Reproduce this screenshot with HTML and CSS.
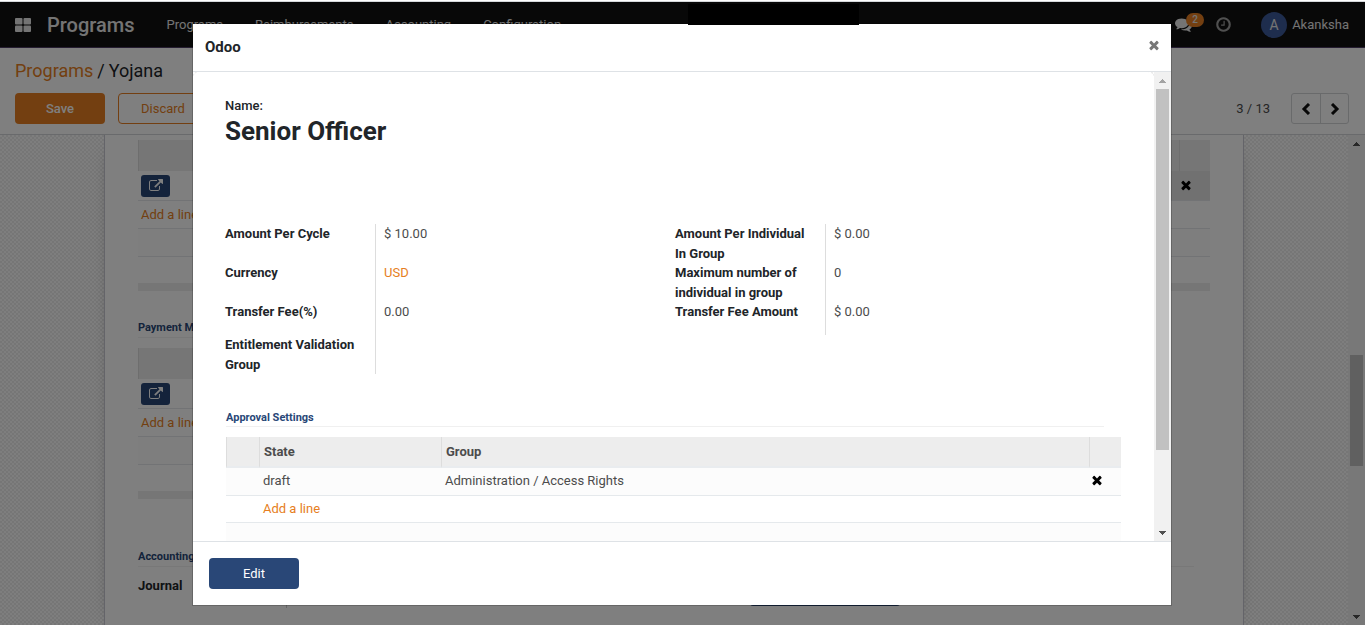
FILE: index.html
```html
<!DOCTYPE html>
<html lang="en">
<head>
<meta charset="utf-8">
<title>Odoo</title>
<link rel="stylesheet" href="styles.css">
</head>
<body>
<svg class="sprite" aria-hidden="true">
  <symbol id="i-times" viewBox="0 0 1792 1792"><path d="M1490 1322q0 40-28 68l-136 136q-28 28-68 28t-68-28l-294-294-294 294q-28 28-68 28t-68-28l-136-136q-28-28-28-68t28-68l294-294-294-294q-28-28-28-68t28-68l136-136q28-28 68-28t68 28l294 294 294-294q28-28 68-28t68 28l136 136q28 28 28 68t-28 68l-294 294 294 294q28 28 28 68z"/></symbol>
  <symbol id="i-link" viewBox="0 0 1792 1792"><path d="M1408 928v320q0 119-84.500 203.500t-203.500 84.500h-832q-119 0-203.500-84.500t-84.500-203.500v-832q0-119 84.500-203.500t203.500-84.500h704q14 0 23 9t9 23v64q0 14-9 23t-23 9h-704q-66 0-113 47t-47 113v832q0 66 47 113t113 47h832q66 0 113-47t47-113v-320q0-14 9-23t23-9h64q14 0 23 9t9 23zm384-864v512q0 26-19 45t-45 19-45-19l-176-176-652 652q-10 10-23 10t-23-10l-114-114q-10-10-10-23t10-23l652-652-176-176q-19-19-19-45t19-45 45-19h512q26 0 45 19t19 45z"/></symbol>
  <symbol id="i-comments" viewBox="0 0 1792 1792"><path d="M1408 768q0 139-94 257t-256.500 186.500-353.500 68.500q-86 0-176-16-124 88-278 128-36 9-86 16h-3q-11 0-20.500-8t-11.500-21q-1-3-1-6.500t.5-6.500 2-6l2.500-5 3.500-5.500 4-5 4.500-5 4-4.500q5-6 23-25t26-29.500 22.500-29 25-38.500 20.500-44q-124-72-195-177t-71-224q0-139 94-257t256.500-186.500 353.500-68.500 353.500 68.500 256.500 186.500 94 257zm384 256q0 120-71 224.500t-195 176.500q10 24 20.500 44t25 38.500 22.500 29 26 29.500 23 25q1 1 4 4.500t4.500 5 4 5 3.500 5.500l2.500 5 2 6 .5 6.500-1 6.500q-3 14-13 22t-22 7q-50-7-86-16-154-40-278-128-90 16-176 16-271 0-472-132 58 4 88 4 161 0 309-45t264-129q125-92 192-212t67-254q0-77-23-152 129 71 204 178t75 230z"/></symbol>
  <symbol id="i-clock" viewBox="0 0 1792 1792"><path d="M1024 544v448q0 14-9 23t-23 9h-320q-14 0-23-9t-9-23v-64q0-14 9-23t23-9h224v-352q0-14 9-23t23-9h64q14 0 23 9t9 23zm416 352q0-148-73-273t-198-198-273-73-273 73-198 198-73 273 73 273 198 198 273 73 273-73 198-198 73-273zm224 0q0 209-103 385.500t-279.500 279.500-385.500 103-385.500-103-279.500-279.500-103-385.500 103-385.500 279.500-279.500 385.500-103 385.500 103 279.500 279.500 103 385.500z"/></symbol>
  <symbol id="i-apps" viewBox="0 0 16 14"><rect width="7.500" height="6.500" rx="1"/><rect x="8.500" width="7.500" height="6.500" rx="1"/><rect y="7.500" width="7.500" height="6.500" rx="1"/><rect x="8.500" y="7.500" width="7.500" height="6.500" rx="1"/></symbol>
  <symbol id="i-up" viewBox="0 0 7 4"><path d="M3 0h1v1h1v1h1v1h1v1H0V3h1V2h1V1h1z"/></symbol>
  <symbol id="i-down" viewBox="0 0 7 4"><path d="M0 0h7v1H6v1H5v1H4v1H3V3H2V2H1V1H0z"/></symbol>
</svg>

<div class="page">
  <div class="window-edge"></div>
  <header class="navbar">
    <button class="apps" aria-label="Apps"><svg class="icon"><use href="#i-apps"/></svg></button>
    <a class="brand" href="#">Programs</a>
    <nav class="menu">
      <a href="#">Programs</a>
      <a href="#">Reimbursements</a>
      <a href="#">Accounting</a>
      <a href="#">Configuration</a>
    </nav>
    <div class="systray">
      <button class="chat" aria-label="Messages"><svg class="icon"><use href="#i-comments"/></svg><span class="badge">2</span></button>
      <button class="clock" aria-label="Activities"><svg class="icon"><use href="#i-clock"/></svg></button>
      <a class="user" href="#"><span class="avatar">A</span>Akanksha</a>
    </div>
  </header>

  <section class="control">
    <div class="crumbs"><a href="#">Programs</a><span>/</span><span>Yojana</span></div>
    <div class="control-row">
      <button class="btn btn-save">Save</button>
      <button class="btn btn-discard">Discard</button>
      <span class="count">3 / 13</span>
      <div class="pager">
        <button aria-label="Previous"><svg class="chev" viewBox="0 0 10 12"><path d="M8 1 3 6l5 5"/></svg></button>
        <button aria-label="Next"><svg class="chev" viewBox="0 0 10 12"><path d="m2 1 5 5-5 5"/></svg></button>
      </div>
    </div>
  </section>

  <div class="workspace">
    <main class="canvas">
      <div class="sheet">
        <table class="list">
          <thead><tr><th></th><th></th><th class="split"></th></tr></thead>
          <tbody>
            <tr class="record"><td><button class="open" aria-label="Open"><svg class="icon"><use href="#i-link"/></svg></button></td><td class="hot"></td><td class="hot"><button class="remove" aria-label="Delete"><svg class="icon"><use href="#i-times"/></svg></button></td></tr>
            <tr><td colspan="3"><a href="#">Add a line</a></td></tr>
            <tr class="alt"><td colspan="3"></td></tr>
            <tr class="last"><td colspan="3"></td></tr>
          </tbody>
          <tfoot><tr><td colspan="3"></td></tr></tfoot>
        </table>
        <section class="payment">
          <h2 class="heading heading-payment">Payment Management</h2>
          <table class="list">
            <thead><tr><th></th><th></th><th class="split"></th></tr></thead>
            <tbody>
              <tr class="record"><td><button class="open" aria-label="Open"><svg class="icon"><use href="#i-link"/></svg></button></td><td></td><td></td></tr>
              <tr><td colspan="3"><a href="#">Add a line</a></td></tr>
              <tr class="alt"><td colspan="3"></td></tr>
              <tr class="last"><td colspan="3"></td></tr>
            </tbody>
            <tfoot><tr><td colspan="3"></td></tr></tfoot>
          </table>
        </section>
        <h2 class="heading heading-accounting">Accounting</h2>
        <div class="journal"><div class="journal-label">Journal</div><div class="journal-value"><button class="journal-action" aria-label="Action"></button></div></div>
      </div>
    </main>
    <div class="bar page-bar"><svg class="arrow"><use href="#i-up"/></svg><div class="track"><div class="thumb"></div></div><svg class="arrow"><use href="#i-down"/></svg></div>
  </div>
</div>

<div class="overlay">
  <div class="modal" role="dialog" aria-labelledby="dialog-title">
    <header class="modal-head"><h1 id="dialog-title">Odoo</h1><button class="close" aria-label="Close"><svg class="icon"><use href="#i-times"/></svg></button></header>
    <div class="modal-body">
      <div class="form">
        <div class="name-label">Name:</div>
        <h2 class="name">Senior Officer</h2>
        <div class="groups">
          <dl class="fields">
            <dt>Amount Per Cycle</dt><dd>$ 10.00</dd>
            <dt>Currency</dt><dd><a href="#">USD</a></dd>
            <dt class="short">Transfer Fee(%)</dt><dd>0.00</dd>
            <dt>Entitlement Validation Group</dt><dd></dd>
          </dl>
          <dl class="fields">
            <dt>Amount Per Individual In Group</dt><dd>$ 0.00</dd>
            <dt>Maximum number of individual in group</dt><dd>0</dd>
            <dt class="short">Transfer Fee Amount</dt><dd>$ 0.00</dd>
          </dl>
        </div>
        <h3 class="heading heading-approval">Approval Settings</h3>
        <table class="approval">
          <thead><tr><th class="c-handle"></th><th class="c-state">State</th><th>Group</th><th class="c-remove"></th></tr></thead>
          <tbody>
            <tr class="alt"><td></td><td>draft</td><td>Administration / Access Rights</td><td><button class="remove" aria-label="Delete"><svg class="icon"><use href="#i-times"/></svg></button></td></tr>
            <tr><td></td><td colspan="3"><a href="#">Add a line</a></td></tr>
            <tr class="alt"><td colspan="4"></td></tr>
          </tbody>
        </table>
      </div>
      <div class="bar modal-bar"><svg class="arrow faded"><use href="#i-up"/></svg><div class="track"><div class="thumb"></div></div><svg class="arrow"><use href="#i-down"/></svg></div>
    </div>
    <footer class="modal-foot"><button class="btn btn-edit">Edit</button></footer>
  </div>
</div>
<div class="mask"></div>
</body>
</html>
```

FILE: styles.css
```css
:root {
  --orange: #e67e22;
  --navy: #294777;
  --checker: repeating-conic-gradient(#ececec 0 25%, #fdfdfd 0 50%) 0 0 / 4px 4px;
}
* { box-sizing: border-box; }
body {
  margin: 0;
  font: 13px/1.5 Roboto, "Liberation Sans", sans-serif;
  color: #4c4c4c;
  overflow: hidden;
}
a { color: var(--orange); text-decoration: none; }
button { font: inherit; border: 0; padding: 0; background: none; color: inherit; }
h1, h2, h3, dl, dd { margin: 0; }
.sprite { display: none; }
.icon { display: block; width: 14px; height: 14px; fill: currentColor; }

.page { display: flex; flex-direction: column; height: 100vh; background: #fff; }
.window-edge { flex: none; height: 2px; background: #fff; border-bottom: 1px solid #d5d8db; }

.navbar {
  flex: none;
  display: flex;
  align-items: center;
  height: 46px;
  padding: 0 16px 0 15px;
  background: #101010;
  border-bottom: 1px solid #4b3a63;
  color: #e8e8e8;
}
.navbar a { color: inherit; }
.apps .icon { width: 16px; height: 14px; }
.brand { margin-left: 16px; font-size: 20px; font-weight: 500; }
.menu { display: flex; gap: 32px; margin-left: 32px; }
.systray { display: flex; align-items: center; margin-left: auto; }
.chat { position: relative; }
.chat .icon { width: 17px; height: 17px; }
.badge {
  position: absolute;
  left: 11px;
  top: -3px;
  width: 18px;
  height: 14px;
  border-radius: 7px;
  background: var(--orange);
  font-size: 10px;
  line-height: 14px;
  font-weight: 500;
  text-align: center;
}
.clock { margin-left: 23px; color: #a0a0a0; }
.clock .icon { width: 17px; height: 17px; }
.user { display: flex; align-items: center; gap: 5px; margin-left: 29px; }
.avatar {
  width: 26px;
  height: 26px;
  border-radius: 50%;
  background: #3d5a9b;
  font-size: 14px;
  line-height: 26px;
  text-align: center;
}

.control { flex: none; padding: 9px 16px 10px 15px; border-bottom: 1px solid #d3d5d8; }
.crumbs { display: flex; gap: 4px; font-size: 18px; line-height: 28px; color: #212529; }
.control-row { display: flex; align-items: center; margin-top: 8px; }
.btn { width: 90px; height: 31px; border-radius: 4px; }
.btn-save { background: var(--orange); color: #fff; font-weight: 500; }
.btn-discard { margin-left: 13px; border: 1px solid var(--orange); color: var(--orange); }
.count { margin-left: auto; }
.pager { display: flex; margin-left: 21px; border: 1px solid #d2d4d7; border-radius: 3px; }
.pager button { display: grid; place-items: center; width: 28px; height: 29px; }
.pager button + button { border-left: 1px solid #d2d4d7; }
.chev { width: 10px; height: 12px; fill: none; stroke: #111; stroke-width: 3; }

.workspace { flex: 1; display: flex; min-height: 0; }
.canvas { flex: 1; overflow: hidden; background: var(--checker); }
.sheet {
  max-width: 1140px;
  min-height: 100%;
  margin: 0 auto;
  padding: 5px 33px;
  background: #fff;
  border: solid #c8c8d3;
  border-width: 0 1px;
  box-shadow: 0 5px 20px -15px #000;
}
.payment { width: 50%; }
.list { width: 100%; border-collapse: separate; border-spacing: 0; table-layout: fixed; }
.list th { height: 31px; background: #ececec; border-left: 1px solid #ddd; padding: 0; }
.list th:nth-child(2) { border-left: 0; }
.list th:first-child { width: 200px; }
.list .split { width: 31px; }
.list td { height: 28px; padding: 0 3px; line-height: 20px; border-bottom: 1px solid #e4e7ea; }
.list .record td { height: 30px; }
.list .alt td { background: #fcfcfc; }
.list .hot { background: #e2e2e2; }
.list .last td { height: 26px; border-bottom: 0; }
.list tfoot td { height: 8px; background: #ececec; border: 0; padding: 0; }
.open {
  display: grid;
  place-items: center;
  width: 29px;
  height: 22px;
  border-radius: 3px;
  background: var(--navy);
  color: #fff;
}
.remove { display: block; color: #000; margin: -2px 0 0 -3px; }

.heading {
  font-size: 11px;
  line-height: 18px;
  font-weight: 700;
  color: var(--navy);
  border-bottom: 1px solid #f0f0f0;
}
.heading-payment { margin: 28px 16px 10px 0; }
.heading-accounting { margin: 49px 16px 9px 0; }
.journal { display: flex; font-weight: 700; color: #212529; }
.journal-label { width: 148px; }
.journal-value { display: flex; flex: 1; height: 32px; border-left: 1px solid #ccc; }
.journal-action { width: 150px; height: 30px; margin-left: 463px; border-radius: 3px; background: var(--navy); }

.bar { flex: none; display: flex; flex-direction: column; width: 17px; background: #f1f1f1; }
.arrow { flex: none; width: 7px; height: 4px; margin: 7px 5px 6px; fill: #505050; }
.arrow.faded { fill: #a3a3a3; }
.track { flex: 1; display: flex; flex-direction: column; padding: 0 2px; }
.thumb { background: #c1c1c1; }
.page-bar .track { padding-bottom: 142px; }
.page-bar .thumb { flex: none; height: 111px; margin-top: auto; }
.modal-bar .thumb { height: 83%; }

.overlay {
  position: fixed;
  inset: 2px 0 0;
  padding: 21px 1px 19px 0;
  background: rgba(0, 0, 0, .5);
}
.modal {
  display: flex;
  flex-direction: column;
  max-width: 980px;
  height: 100%;
  margin: 0 auto;
  background: #fff;
  background-clip: padding-box;
  border: 1px solid rgba(0, 0, 0, .2);
}
.modal-head {
  flex: none;
  display: flex;
  align-items: center;
  justify-content: space-between;
  height: 48px;
  padding: 0 10px 0 12px;
  border-bottom: 1px solid #dee2e6;
  color: #212529;
}
.modal-head h1 { font-size: 15px; font-weight: 700; }
.close { padding-bottom: 5px; color: #777; }
.modal-body { flex: 1; display: flex; min-height: 0; overflow: hidden; background: var(--checker); }
.form {
  flex: 1;
  min-width: 0;
  padding: 24px 29px 0 32px;
  background: #fff;
  border-radius: 6px 6px 0 0;
  overflow: hidden;
}
.name-label { line-height: 20px; font-weight: 500; color: #212529; }
.name { font-size: 26px; line-height: 30px; font-weight: 700; color: #212529; }
.groups { display: flex; align-items: flex-start; margin-top: 78px; }
.fields { flex: 0 1 450px; display: grid; grid-template-columns: 150px 1fr; }
.fields dt { height: 39px; padding-right: 15px; font-weight: 700; color: #212529; }
.fields .short { height: 33px; }
.fields dd { padding-left: 8px; border-left: 1px solid #ddd; }
.heading-approval { margin: 36px 21px 10px 1px; line-height: 16px; }
.approval {
  width: calc(100% - 5px);
  margin-left: 1px;
  border-collapse: separate;
  border-spacing: 0;
  table-layout: fixed;
}
.approval th {
  height: 31px;
  padding: 0 4px;
  text-align: left;
  font-weight: 700;
  background: #ededed;
  border-left: 1px solid #ddd;
  border-bottom: 2px solid #e9ecef;
}
.approval td { height: 27px; padding: 0 4px; border-bottom: 1px solid #e5e9ec; }
.approval tbody tr:first-child td { height: 28px; padding-bottom: 2px; }
.approval .alt td { background: #fcfcfc; }
.c-handle { width: 33px; }
.c-state { width: 182px; }
.c-remove { width: 32px; }
.modal-foot { flex: none; padding: 16px; border-top: 1px solid #dee2e6; }
.btn-edit { display: block; background: var(--navy); color: #fff; }

.mask { position: fixed; left: 688px; top: 4px; width: 171px; height: 21px; background: #000; }
```
